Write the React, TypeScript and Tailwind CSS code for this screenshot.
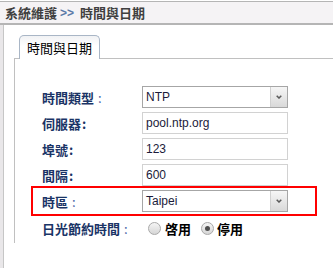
import type { ReactNode } from "react";

const cjk = "font-['Noto_Sans_CJK_TC','Noto_Sans_CJK_SC',sans-serif]";
const latin = "font-['Liberation_Sans','Noto_Sans_CJK_TC',sans-serif]";

const Label = ({ text, colon }: { text: string; colon: "bold" | "thin" }) => (
  <div className={`w-[100px] shrink-0 text-[13px] font-bold text-[#1a3466] ${cjk} leading-none`}>
    {text}
    {colon === "bold" ? (
      <span className="ml-px">:</span>
    ) : (
      <span className="ml-[4px] font-normal text-[#4a66a8]">:</span>
    )}
  </div>
);

const TextBox = ({ value }: { value: string }) => (
  <div
    className={`h-[22px] w-[146px] border border-[#d2d2d2] bg-white flex items-center pl-[3px] text-[12px] text-[#1b1b3a] ${latin}`}
  >
    {value}
  </div>
);

const SelectBox = ({ value }: { value: string }) => (
  <div className="h-[22px] w-[146px] border border-[#a6a6a6] bg-white flex">
    <div className={`flex-1 flex items-center pl-[3px] text-[12px] text-[#1b1b3a] ${latin}`}>
      {value}
    </div>
    <div className="w-[17px] border-l border-[#d0d0d0] bg-linear-to-b from-[#f6f6f6] to-[#d9d9d9] flex items-center justify-center">
      <svg width="6" height="4" viewBox="0 0 6 4" fill="none">
        <path d="M0.7 0.7 L3 3 L5.3 0.7" stroke="#5a5a5a" strokeWidth="1.5" />
      </svg>
    </div>
  </div>
);

const Row = ({ children, last }: { children: ReactNode; last?: boolean }) => (
  <div className={`ml-[27px] h-[22px] flex items-center ${last ? "" : "mb-[4px]"}`}>{children}</div>
);

const Radio = ({ checked }: { checked?: boolean }) => (
  <span className="w-[13px] h-[13px] rounded-full border border-[#a9a9a9] bg-linear-to-b from-[#f5f5f5] to-[#d6d6d6] flex items-center justify-center">
    {checked && <span className="w-[5px] h-[5px] rounded-full bg-[#4f4f4f]" />}
  </span>
);

export default function App() {
  return (
    <div className={`w-[333px] h-[268px] bg-white overflow-hidden ${cjk}`}>
      <div className="mt-px h-[24px] border-t border-b-2 border-[#b5b5b5] bg-[#f5f3f5] flex items-center pl-[5px] text-[13px] font-bold text-[#404040] leading-none">
        系統維護
        <span className={`ml-[3px] mr-[6px] text-[12px] text-[#5a7aa8] ${latin}`}>&gt;&gt;</span>
        時間與日期
      </div>
      <div className="flex h-[243px]">
        <div className="w-[3px] bg-[#e9e7e9]" />
        <div className="flex-1 border-l border-[#c6c6c6] pt-[10px]">
          <div className="ml-[10px] h-[24px] flex items-end border-b border-[#c0c0c0]">
            <div className="ml-[5px] -mb-px h-[24px] w-[81px] border border-b-0 border-[#a9b6c6] rounded-t-[5px] bg-linear-to-b from-[#f1f2f4] to-white to-[45%] flex items-center justify-center text-[13px] text-black leading-none">
              時間與日期
            </div>
          </div>
          <div className="ml-[10px] h-[184px] border-l border-[#c0c0c0] pt-[27px]">
            <Row>
              <Label text="時間類型" colon="thin" />
              <SelectBox value="NTP" />
            </Row>
            <Row>
              <Label text="伺服器" colon="bold" />
              <TextBox value="pool.ntp.org" />
            </Row>
            <Row>
              <Label text="埠號" colon="bold" />
              <TextBox value="123" />
            </Row>
            <Row last>
              <Label text="間隔" colon="bold" />
              <TextBox value="600" />
            </Row>
            <div className="ml-[16px] w-[286px] h-[30px] border-2 border-[#ff0000] pl-[9px] py-[2px] flex items-center">
              <Label text="時區" colon="thin" />
              <SelectBox value="Taipei" />
            </div>
            <div className="ml-[27px] mt-px h-[22px] flex items-center">
              <Label text="日光節約時間" colon="thin" />
              <div className="ml-[6px] flex items-center text-[13px] font-bold text-black leading-none">
                <Radio />
                <span className="ml-[4px]">啓用</span>
                <span className="ml-[10px]">
                  <Radio checked />
                </span>
                <span className="ml-[3px]">停用</span>
              </div>
            </div>
          </div>
        </div>
      </div>
    </div>
  );
}
